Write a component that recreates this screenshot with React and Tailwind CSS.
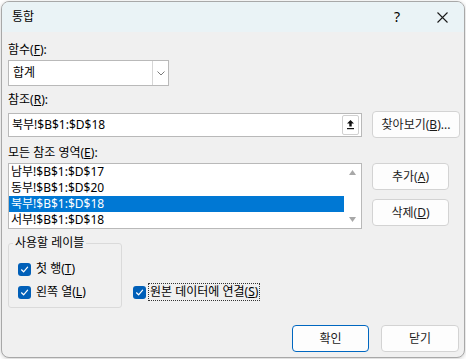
import React from "react";

const font = { fontFamily: "'Noto Sans', 'Noto Sans CJK KR', sans-serif" };

function Check() {
  return (
    <span className="flex h-[13px] w-[13px] shrink-0 items-center justify-center rounded-[3px] bg-[#005fb8]">
      <svg width="9" height="9" viewBox="0 0 9 9">
        <path d="M1.5 4.8 L3.6 6.8 L7.6 2.2" fill="none" stroke="#fff" strokeWidth="1.2" strokeLinecap="round" strokeLinejoin="round" />
      </svg>
    </span>
  );
}

function Btn({ children, w, primary }) {
  return (
    <div
      className={`flex h-[27px] items-center justify-center rounded-[4px] border bg-[#fdfdfd] text-[12px] text-[#1b1b1b] ${
        primary ? "border-[#0067c0]" : "border-[#d3d3d3]"
      }`}
      style={{ width: w }}
    >
      {children}
    </div>
  );
}

export default function App() {
  const rows = ["남부!$B$1:$D$17", "동부!$B$1:$D$20", "북부!$B$1:$D$18", "서부!$B$1:$D$18"];
  return (
    <div className="h-[359px] w-[466px] bg-white pl-[1px] pt-[1px]" style={font}>
      <div className="flex h-[357px] w-[464px] flex-col overflow-hidden rounded-[8px] border border-[#a8a8a8] bg-[#f0f0f0] shadow-[0_1px_4px_rgba(0,0,0,0.2)]">
        {/* Title bar */}
        <div className="flex h-[30px] shrink-0 items-center bg-[#eaf3f6] text-[12px] text-black">
          <span className="ml-[10px] leading-[16px]">통합</span>
          <span className="ml-auto w-[12px] text-center text-[14px] leading-[16px]">?</span>
          <span className="ml-[33px] mr-[16px] flex h-[12px] w-[12px] items-center justify-center">
            <svg width="11" height="11" viewBox="0 0 11 11">
              <path d="M0.5 0.5 L10.5 10.5 M10.5 0.5 L0.5 10.5" stroke="#1a1a1a" strokeWidth="1.1" />
            </svg>
          </span>
        </div>

        {/* Body */}
        <div className="flex flex-col pl-[6px] text-[12px] text-black">
          <div className="mt-[10px] leading-[16px]">
            함수(<u>F</u>):
          </div>
          <div className="mt-[2px] flex h-[26px] w-[161px] items-stretch border border-[#b9b9b9] bg-white">
            <div className="flex flex-1 items-center pl-[4px] leading-[16px]">합계</div>
            <div className="flex w-[16px] items-center justify-center border-l border-[#d6d6d6]">
              <svg width="8" height="5" viewBox="0 0 8 5">
                <path d="M0.5 0.5 L4 4 L7.5 0.5" fill="none" stroke="#7a7a7a" strokeWidth="1" />
              </svg>
            </div>
          </div>

          <div className="mt-[6px] leading-[16px]">
            참조(<u>R</u>):
          </div>
          <div className="mt-[3px] flex items-center">
            <div className="flex h-[24px] w-[354px] items-center border border-[#b9b9b9] bg-white pr-[2px]">
              <span className="flex-1 pl-[3px] leading-[16px]">북부!$B$1:$D$18</span>
              <span className="flex h-[20px] w-[17px] items-center justify-center rounded-[2px] border border-[#d0d0d0] bg-white">
                <svg width="9" height="11" viewBox="0 0 9 11">
                  <path d="M4.5 1 L8 4.5 L5.7 4.5 L5.7 7.5 L3.3 7.5 L3.3 4.5 L1 4.5 Z" fill="#111" />
                  <rect x="1" y="9" width="7" height="1.2" fill="#111" />
                </svg>
              </span>
            </div>
            <div className="ml-[10px]">
              <Btn w={88}>
                찾아보기(<u>B</u>)...
              </Btn>
            </div>
          </div>

          <div className="mt-[7px] leading-[16px]">
            모든 참조 영역(<u>E</u>):
          </div>
          <div className="mt-[2px] flex items-start">
            <div className="flex h-[66px] w-[354px] border border-[#b9b9b9] bg-white">
              <div className="flex flex-1 flex-col">
                {rows.map((r, i) => (
                  <div
                    key={r}
                    className={`flex h-[16px] items-center pl-[2px] leading-[16px] ${
                      i === 2 ? "bg-[#0078d4] text-white" : "text-black"
                    }`}
                  >
                    {r}
                  </div>
                ))}
              </div>
              <div className="flex w-[17px] flex-col items-center justify-between py-[6px]">
                <svg width="7" height="5" viewBox="0 0 7 5">
                  <path d="M3.5 0 L7 5 L0 5 Z" fill="#a8a8a8" />
                </svg>
                <svg width="7" height="5" viewBox="0 0 7 5">
                  <path d="M0 0 L7 0 L3.5 5 Z" fill="#a8a8a8" />
                </svg>
              </div>
            </div>
            <div className="ml-[10px] flex flex-col gap-[9px]">
              <Btn w={77}>
                추가(<u>A</u>)
              </Btn>
              <Btn w={77}>
                삭제(<u>D</u>)
              </Btn>
            </div>
          </div>

          <div className="mt-[6px] flex items-start">
            <fieldset className="h-[73px] w-[114px] rounded-[3px] border border-[#dadada] pl-[9px]">
              <legend className="-ml-[5px] px-[2px] leading-[16px]">사용할 레이블</legend>
              <div className="mt-[10px] flex h-[16px] items-center gap-[5px] leading-[16px]">
                <Check />
                <span>
                  첫 행(<u>T</u>)
                </span>
              </div>
              <div className="mt-[7px] flex h-[16px] items-center gap-[5px] leading-[16px]">
                <Check />
                <span>
                  왼쪽 열(<u>L</u>)
                </span>
              </div>
            </fieldset>
            <div className="ml-[11px] mt-[48px] flex h-[18px] items-center">
              <Check />
              <span className="ml-[2px] flex h-[18px] items-center border border-dotted border-[#333] px-[1px] leading-[16px]">
                원본 데이터에 연결(<u>S</u>)
              </span>
            </div>
          </div>

          <div className="mt-[17px] flex pl-[284px]">
            <Btn w={77} primary>
              확인
            </Btn>
            <div className="ml-[12px]">
              <Btn w={78}>닫기</Btn>
            </div>
          </div>
        </div>
      </div>
    </div>
  );
}
